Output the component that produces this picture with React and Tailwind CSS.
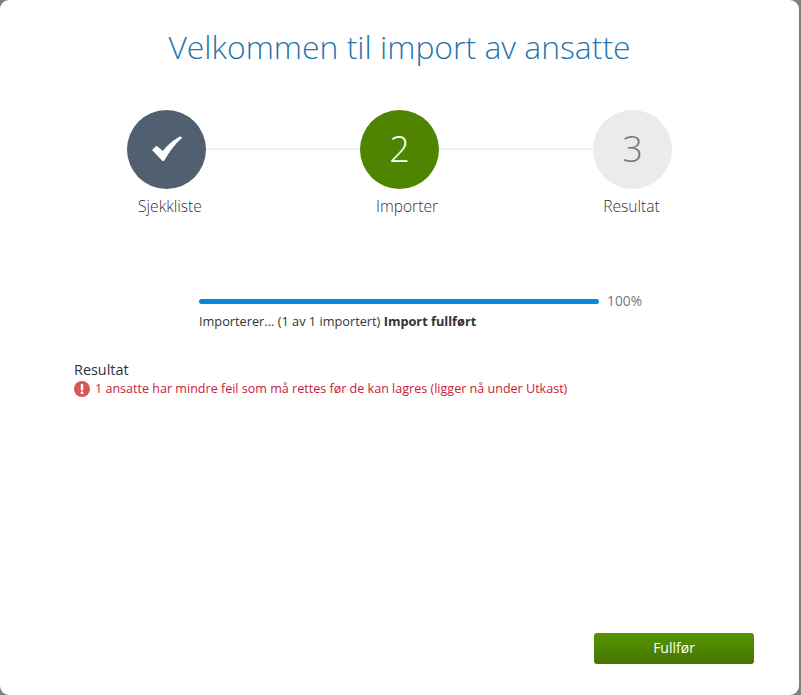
import React from "react";

function Step({ label, circle, labelClass, children }) {
  return (
    <div className="flex flex-col items-center">
      <div className={`relative z-10 flex h-[79px] w-[79px] items-center justify-center rounded-full ${circle}`}>
        {children}
      </div>
      <div className={`mt-[7px] text-[15.6px] leading-[20px] font-light text-[#333333] ${labelClass}`}>{label}</div>
    </div>
  );
}

export default function App() {
  return (
    <div className="h-[695px] w-[801px] overflow-hidden bg-[#7f7f7f] font-['Open_Sans',sans-serif]">
      <div className="flex h-full w-[799px] flex-col rounded-[9px] bg-white">
        <h1 className="pt-[25px] text-center text-[31.9px] leading-[44px] font-light text-[#2675ad]">
          Velkommen til import av ansatte
        </h1>

        <div className="relative mx-auto mt-[41px] grid w-[699px] grid-cols-3">
          <div className="absolute top-[38px] left-[116px] h-[2px] w-[466px] bg-[#f1f1f1]"></div>
          <Step label="Sjekkliste" circle="bg-[#506070]" labelClass="pl-[7px]">
            <svg width="30" height="25" viewBox="0 0 30 25" className="mb-[2px]">
              <path d="M0 14 L4.5 9.7 L11 15 C15 9.5 22 3.5 28.5 0.3 L30 2 C23 8 17 16 12 25 L10.5 25 Z" fill="#ffffff" />
            </svg>
          </Step>
          <Step label="Importer" circle="bg-[#4e8400]" labelClass="pl-[15px]">
            <span className="mb-[2px] text-[36px] leading-none font-light text-white">2</span>
          </Step>
          <Step label="Resultat" circle="bg-[#ebebeb]" labelClass="pr-[2px]">
            <span className="mb-[2px] text-[36px] leading-none font-light text-[#777777]">3</span>
          </Step>
        </div>

        <div className="mt-[76px] ml-[199px] flex items-center">
          <div className="h-[5px] w-[400px] rounded-[3px] bg-[#0a88d8]"></div>
          <span className="ml-[8px] text-[13.8px] leading-[18px] text-[#777777]">100%</span>
        </div>
        <div className="mt-[2px] ml-[199px] text-[12.75px] leading-[18px] text-[#333333]">
          Importerer... (1 av 1 importert) <b className="font-bold">Import fullført</b>
        </div>

        <div className="mt-[30px] ml-[74px] text-[14.4px] leading-[20px] font-medium text-[#2f2f3f]">Resultat</div>
        <div className="ml-[74px] flex items-center text-[12.55px] leading-[18px] text-[#c9203a]">
          <svg width="16" height="16" viewBox="0 0 16 16" className="mr-[5px] shrink-0">
            <circle cx="8" cy="8" r="8" fill="#d9545c" />
            <rect x="6.8" y="3" width="2.4" height="6.5" rx="0.8" fill="#ffffff" />
            <rect x="6.8" y="10.6" width="2.4" height="2.4" rx="0.6" fill="#ffffff" />
          </svg>
          1 ansatte har mindre feil som må rettes før de kan lagres (ligger nå under Utkast)
        </div>

        <div className="mt-auto mr-[45px] mb-[31px] flex justify-end">
          <button className="h-[31px] w-[160px] rounded-[3px] bg-gradient-to-b from-[#559600] to-[#467400] pb-[2px] text-[14px] font-normal text-white">
            Fullfør
          </button>
        </div>
      </div>
    </div>
  );
}
